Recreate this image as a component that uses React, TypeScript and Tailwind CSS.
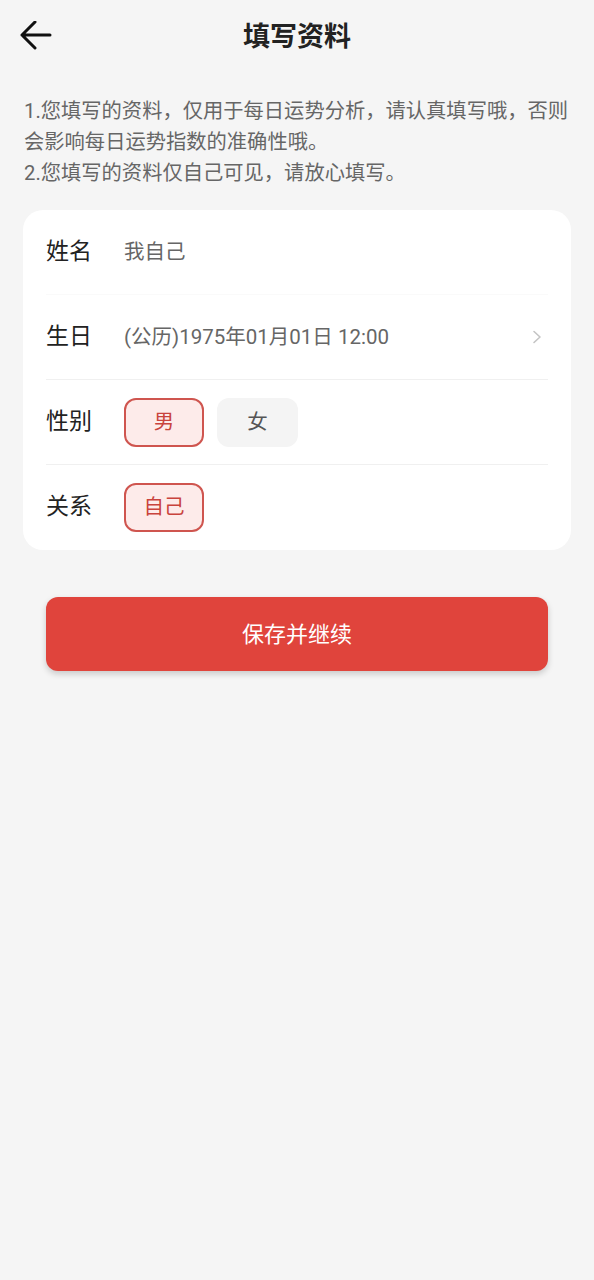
import React from "react"

const font = { fontFamily: '"Roboto", "Noto Sans CJK SC", sans-serif' }

function BackArrow() {
  return (
    <svg width="32" height="30" viewBox="0 0 32 30" fill="none" stroke="#111" strokeWidth="3" strokeLinecap="round" strokeLinejoin="round">
      <path d="M2 14h28M15 1L2 14l13 13" />
    </svg>
  )
}

function Chevron() {
  return (
    <svg width="10" height="14" viewBox="0 0 10 14" fill="none" stroke="#c4c4c4" strokeWidth="1.6" strokeLinecap="round" strokeLinejoin="round">
      <path d="M2 1.5L8 7l-6 5.5" />
    </svg>
  )
}

function Chip({ label, active }: { label: string; active?: boolean }) {
  return (
    <div
      className={
        active
          ? "flex h-[49px] w-[80px] items-center justify-center rounded-[12px] border-2 border-[#cf554f] bg-[#fdebea] text-[20.5px] text-[#c9433d]"
          : "flex h-[49px] w-[81px] items-center justify-center rounded-[12px] bg-[#f4f4f4] text-[20.5px] text-[#555]"
      }
    >
      {label}
    </div>
  )
}

function Row({ label, children, line }: { label: string; children: React.ReactNode; line?: string }) {
  return (
    <div className={"flex h-[85px] items-center " + (line ?? "")}>
      <span className="w-[78px] text-[23px] text-[#222]">{label}</span>
      <div className="flex flex-1 items-center">{children}</div>
    </div>
  )
}

export default function App() {
  return (
    <div className="min-h-[1280px] w-full bg-[#f5f5f5]" style={font}>
      {/* Barre de titre */}
      <header className="relative flex h-[75px] items-center justify-center">
        <button className="absolute left-[20px] top-[21px]">
          <BackArrow />
        </button>
        <h1 className="text-[27px] font-bold text-[#222]">填写资料</h1>
      </header>

      {/* Notes */}
      <div className="px-[24px] pt-[21px] text-[20.3px] leading-[31px] text-[#666]">
        <p>1.您填写的资料，仅用于每日运势分析，请认真填写哦，否则会影响每日运势指数的准确性哦。</p>
        <p>2.您填写的资料仅自己可见，请放心填写。</p>
      </div>

      {/* Formulaire */}
      <div className="mx-[23px] mt-[21px] rounded-[20px] bg-white px-[23px]">
        <Row label="姓名" line="border-b border-[#fafafa]">
          <span className="text-[20.5px] text-[#666]">我自己</span>
        </Row>
        <Row label="生日" line="border-b border-[#f0f0f0]">
          <span className="flex-1 text-[20.5px] text-[#666]">(公历)1975年01月01日 12:00</span>
          <span className="mr-[6px]">
            <Chevron />
          </span>
        </Row>
        <Row label="性别" line="border-b border-[#f0f0f0]">
          <div className="flex gap-[13px]">
            <Chip label="男" active />
            <Chip label="女" />
          </div>
        </Row>
        <Row label="关系">
          <Chip label="自己" active />
        </Row>
      </div>

      {/* Bouton */}
      <div className="mx-[46px] mt-[47px]">
        <button className="flex h-[74px] w-full items-center justify-center rounded-[12px] bg-[#e0443c] text-[22px] text-white shadow-[0_3px_6px_rgba(0,0,0,0.18)]">
          保存并继续
        </button>
      </div>
    </div>
  )
}
